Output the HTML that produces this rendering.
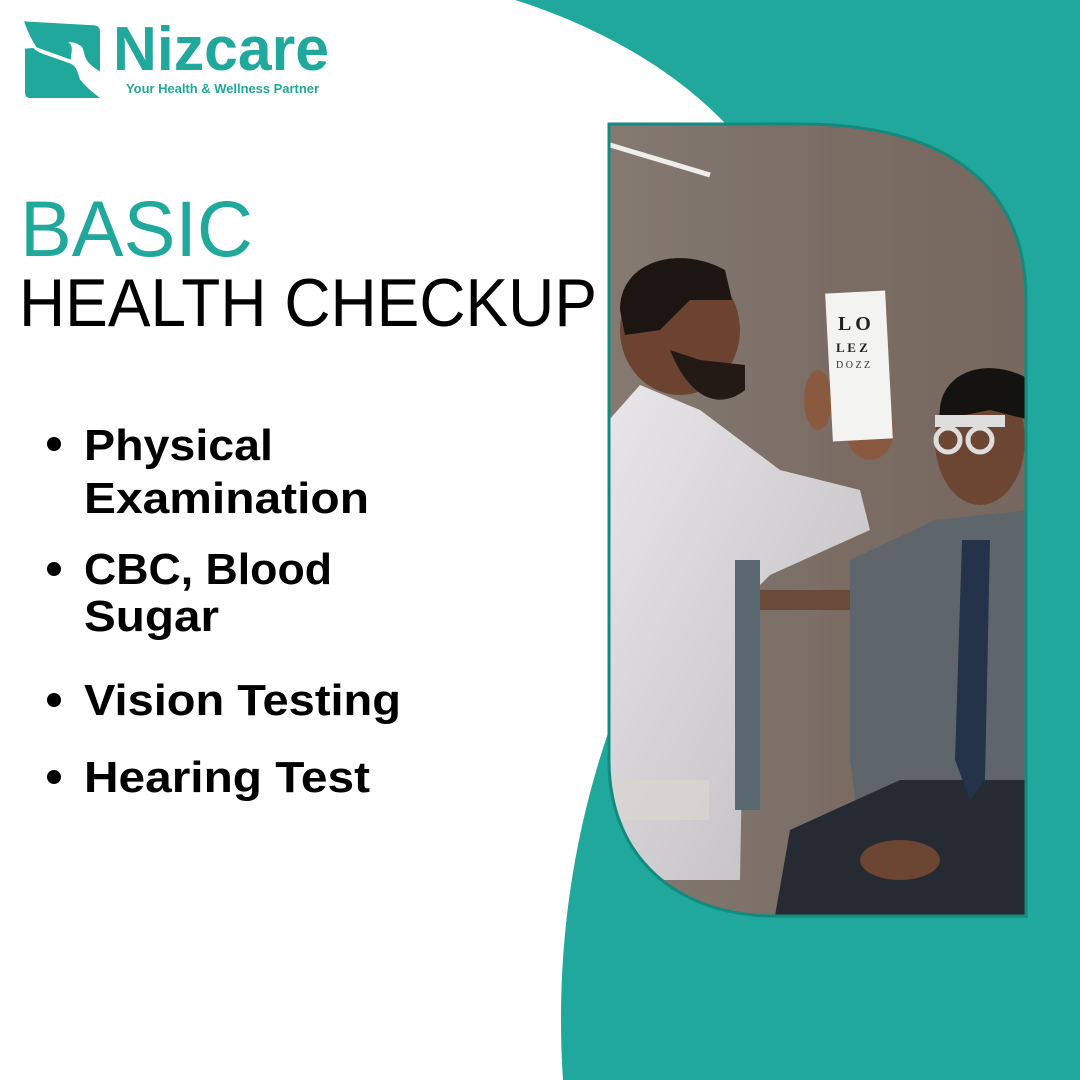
<!DOCTYPE html>
<html><head><meta charset="utf-8"><style>
html,body{margin:0;padding:0;background:#fff;}
svg{display:block}
</style></head><body>
<svg width="1080" height="1080" viewBox="0 0 1080 1080" xmlns="http://www.w3.org/2000/svg">
<defs>
<clipPath id="ph">
<path d="M609,124 L800,124 C940,124 1026,180 1026,300 L1026,916 L775,916 C680,916 609,860 609,760 Z"/>
</clipPath>
<linearGradient id="wall" x1="0" y1="0" x2="1" y2="0">
<stop offset="0" stop-color="#857a72"/><stop offset="0.5" stop-color="#7a6e66"/><stop offset="1" stop-color="#6f635b"/>
</linearGradient>
<linearGradient id="coat" x1="0" y1="0" x2="1" y2="1">
<stop offset="0" stop-color="#e8e6e8"/><stop offset="1" stop-color="#bdbabd"/>
</linearGradient>
</defs>
<rect width="1080" height="1080" fill="#fff"/>
<path d="M515,0 L1080,0 L1080,1080 L563,1080 C555,960 570,830 620,700 L640,600 L740,140 C690,80 610,30 515,0 Z" fill="#1fa89b"/>
<g clip-path="url(#ph)">
<rect x="600" y="110" width="440" height="820" fill="url(#wall)"/>
<rect x="820" y="110" width="220" height="820" fill="#7b6d63" opacity="0.6"/>
<line x1="610" y1="145" x2="710" y2="175" stroke="#eeeeea" stroke-width="5"/>
<rect x="740" y="590" width="140" height="20" fill="#6a4a38"/>
<path d="M609,420 L640,385 L700,410 L780,470 L860,490 L870,530 L770,575 L745,600 L740,880 L640,880 L609,860 Z" fill="url(#coat)"/>
<rect x="735" y="560" width="25" height="250" fill="#596870"/>
<ellipse cx="680" cy="330" rx="60" ry="65" fill="#6b4330"/>
<path d="M620,310 C620,260 680,245 725,270 L732,300 L690,300 L660,330 L625,335 Z" fill="#1c1512"/>
<path d="M670,350 C690,400 720,410 745,390 L745,365 L700,360 Z" fill="#231a16"/>
<ellipse cx="818" cy="400" rx="14" ry="30" fill="#8a5a40"/>
<ellipse cx="870" cy="430" rx="24" ry="30" fill="#8a5a40"/>
<rect x="829" y="292" width="60" height="148" fill="#f3f3f1" transform="rotate(-3 859 366)"/>
<text x="838" y="330" font-family="Liberation Serif,serif" font-size="20" font-weight="bold" fill="#222">L O</text>
<text x="836" y="352" font-family="Liberation Serif,serif" font-size="13" font-weight="bold" fill="#222">L E Z</text>
<text x="836" y="368" font-family="Liberation Serif,serif" font-size="10" fill="#333">D O Z Z</text>
<path d="M850,560 L935,520 L1030,510 L1030,916 L870,916 L850,760 Z" fill="#5f666b"/>
<path d="M775,916 L790,830 L900,780 L1030,780 L1030,916 Z" fill="#262a33"/>
<polygon points="962,540 990,540 985,780 970,800 955,760" fill="#24324a"/>
<ellipse cx="980" cy="440" rx="45" ry="65" fill="#6c4632"/>
<path d="M940,420 C935,370 990,355 1030,380 L1030,420 L990,410 Z" fill="#151212"/>
<rect x="935" y="415" width="70" height="12" fill="#ddd"/>
<circle cx="948" cy="440" r="12" fill="none" stroke="#ddd" stroke-width="5"/>
<circle cx="980" cy="440" r="12" fill="none" stroke="#ddd" stroke-width="5"/>
<ellipse cx="900" cy="860" rx="40" ry="20" fill="#6c4632"/>
<rect x="609" y="780" width="100" height="40" fill="#d8d5d0" opacity="0.8"/>
</g>
<path d="M609,124 L800,124 C940,124 1026,180 1026,300 L1026,916 L775,916 C680,916 609,860 609,760 Z" fill="none" stroke="#138a7e" stroke-width="3"/>
<!-- logo icon -->
<g fill="#1fa89b" transform="translate(20,18) scale(0.3333)">
<path d="M12,10 L225,22 Q240,24 240,40 L240,160 Q205,140 196,118 L190,96 Q186,80 160,74 L145,72 Q158,82 155,100 L152,125 L50,88 Q30,60 12,10 Z"/>
<path d="M15,92 L40,90 Q48,100 70,108 L150,136 Q166,142 172,160 L180,185 Q200,210 240,240 L28,240 Q15,238 15,225 Z M70,170 Q100,150 110,155 L100,175 Z"/>
</g>
<text x="113" y="70" font-family="Liberation Sans,sans-serif" font-size="62" font-weight="bold" fill="#1fa89b" textLength="216" lengthAdjust="spacingAndGlyphs">Nizcare</text>
<text x="126" y="93" font-family="Liberation Sans,sans-serif" font-size="13" font-weight="bold" fill="#1fa89b" textLength="193" lengthAdjust="spacingAndGlyphs">Your Health &amp; Wellness Partner</text>
<text x="20" y="256" font-family="Liberation Sans,sans-serif" font-size="79" fill="#1fa89b" textLength="233" lengthAdjust="spacingAndGlyphs">BASIC</text>
<text x="19" y="326" font-family="Liberation Sans,sans-serif" font-size="68" fill="#000" textLength="578" lengthAdjust="spacingAndGlyphs">HEALTH CHECKUP</text>
<g fill="#000" font-family="Liberation Sans,sans-serif" font-weight="bold" font-size="44">
<circle cx="54" cy="444" r="7"/>
<text x="84" y="460" textLength="189" lengthAdjust="spacingAndGlyphs">Physical</text>
<text x="84" y="513" textLength="285" lengthAdjust="spacingAndGlyphs">Examination</text>
<circle cx="54" cy="569" r="7"/>
<text x="84" y="584" textLength="248" lengthAdjust="spacingAndGlyphs">CBC, Blood</text>
<text x="84" y="631" textLength="135" lengthAdjust="spacingAndGlyphs">Sugar</text>
<circle cx="54" cy="700" r="7"/>
<text x="84" y="715" textLength="317" lengthAdjust="spacingAndGlyphs">Vision Testing</text>
<circle cx="54" cy="777" r="7"/>
<text x="84" y="792" textLength="286" lengthAdjust="spacingAndGlyphs">Hearing Test</text>
</g>
</svg>
</body></html>
